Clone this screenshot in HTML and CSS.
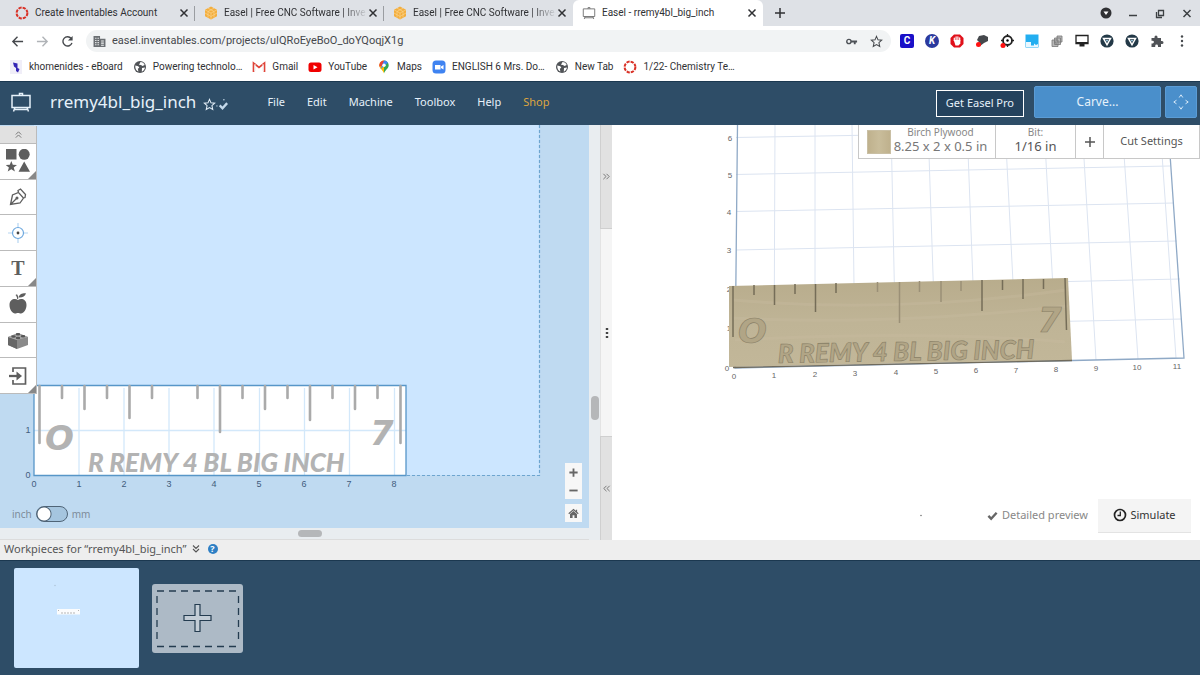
FILE: index.html
```
<!DOCTYPE html>
<html lang="en">
<head>
<meta charset="utf-8">
<meta name="viewport" content="width=device-width, initial-scale=1">
<title>Easel - rremy4bl_big_inch</title>
<link rel="stylesheet" href="styles.css">
</head>
<body>
<svg class="defs" aria-hidden="true">
  <symbol id="close" viewBox="0 0 10 10"><path d="M1.500 1.500l7 7M8.500 1.500l-7 7" fill="none" stroke="currentColor" stroke-width="1.500"/></symbol>
  <symbol id="ring" viewBox="0 0 14 14"><circle cx="7" cy="7" r="5.400" fill="none" stroke="#d93025" stroke-width="2" stroke-dasharray="3.200 1.040"/></symbol>
  <symbol id="hex" viewBox="0 0 14 14"><path d="M7 .5l6 3.300v6.500L7 13.600 1 10.300V3.800z" fill="#f3ae3d"/><path d="M1 3.800l6 3.300 6-3.300M7 7v6.500M4 2.200l6 3.300v6M10 2.200L4 5.500v6M1 7l6 3.500L13 7" fill="none" stroke="#f9d28e" stroke-width=".7"/></symbol>
  <symbol id="easel" viewBox="0 0 22 22"><path d="M2 4.500h18v12H2zM9.500 4.500V2.500h3v2M5 16.500l-1.500 4M17 16.500l1.500 4M4.500 18.500h13" fill="none" stroke="currentColor" stroke-width="1.500"/></symbol>
  <symbol id="globe" viewBox="0 0 14 14"><circle cx="7" cy="7" r="6" fill="#505357"/><path d="M2.300 5.500l3 .7 1 1.500-1.500 1 .6 2.700C3.500 11 2 9 2.300 5.500zM7.500 2c2 0 3.500 1.200 4.200 3L9.500 6 8 5l-2-.3zM9 8l3-.4c-.2 1.800-1.500 3.500-3.200 4.100z" fill="#fff"/></symbol>
  <symbol id="star" viewBox="0 0 14 14"><path d="M7 1.500l1.600 3.700 4 .4-3 2.700.9 4L7 10.200l-3.500 2.100.9-4-3-2.700 4-.4z" fill="none" stroke="currentColor" stroke-width="1.100"/></symbol>
  <symbol id="vpn" viewBox="0 0 14 14"><circle cx="7" cy="7" r="6.600" fill="#233947"/><path d="M3.500 4.500h7L7 10.800z" fill="#233947" stroke="#fff" stroke-width="1.500"/><path d="M5.800 6h2.400L7 8z" fill="#9fd0e8"/></symbol>
  <symbol id="chev" viewBox="0 0 10 10"><path d="M2 5l3-3 3 3M2 8.500l3-3 3 3" fill="none" stroke="currentColor" stroke-width="1.100"/></symbol>
  <symbol id="check" viewBox="0 0 12 12"><path d="M1.500 6.500l3 3 6-6.500" fill="none" stroke="currentColor" stroke-width="2.600"/></symbol>
  <symbol id="plus" viewBox="0 0 12 12"><path d="M6 1v10M1 6h10" fill="none" stroke="currentColor" stroke-width="1.500"/></symbol>
</svg>

<div class="tabstrip">
  <div class="tab"><svg class="fav"><use href="#ring"/></svg><span class="tab-name">Create Inventables Account</span><button class="x" aria-label="Close tab"><svg><use href="#close"/></svg></button></div>
  <div class="tab"><svg class="fav"><use href="#hex"/></svg><span class="tab-name faded">Easel | Free CNC Software | Inve</span><button class="x" aria-label="Close tab"><svg><use href="#close"/></svg></button></div>
  <div class="tab"><svg class="fav"><use href="#hex"/></svg><span class="tab-name faded">Easel | Free CNC Software | Inve</span><button class="x" aria-label="Close tab"><svg><use href="#close"/></svg></button></div>
  <div class="tab active"><svg class="fav gray"><use href="#easel"/></svg><span class="tab-name">Easel - rremy4bl_big_inch</span><button class="x" aria-label="Close tab"><svg><use href="#close"/></svg></button></div>
  <button class="newtab" aria-label="New tab"><svg><use href="#plus"/></svg></button>
  <div class="winctl">
    <button aria-label="Tab search"><svg viewBox="0 0 14 14"><circle cx="7" cy="7" r="5.500" fill="#303134"/><path d="M4.500 5.500h5L7 9z" fill="#fff"/></svg></button>
    <button aria-label="Minimize"><svg viewBox="0 0 14 14"><path d="M3 9.500h8" stroke="#3c4043" stroke-width="1.500"/></svg></button>
    <button aria-label="Restore"><svg viewBox="0 0 14 14"><path d="M5.500 4.500h5v5h-5zM3.500 6v5.500H9" fill="none" stroke="#3c4043" stroke-width="1.300"/></svg></button>
    <button aria-label="Close"><svg viewBox="0 0 14 14"><path d="M3.500 4l7 7M10.500 4l-7 7" stroke="#3c4043" stroke-width="1.500"/></svg></button>
  </div>
</div>

<div class="navbar">
  <button aria-label="Back"><svg viewBox="0 0 14 14"><path d="M13 7H2M7 2L2 7l5 5" fill="none" stroke="#45484c" stroke-width="1.500"/></svg></button>
  <button aria-label="Forward"><svg viewBox="0 0 14 14"><path d="M1 7h11M7 2l5 5-5 5" fill="none" stroke="#b0b3b7" stroke-width="1.500"/></svg></button>
  <button aria-label="Reload"><svg viewBox="0 0 14 14"><path d="M11.800 8.500A5 5 0 1 1 11 3.800" fill="none" stroke="#45484c" stroke-width="1.500"/><path d="M12.500 1v5h-5z" fill="#45484c"/></svg></button>
  <div class="omnibox">
    <svg class="site" viewBox="0 0 12 12"><path d="M.5 1h6v2.500h5V11H.5z" fill="#6b6f73"/><path d="M2 3h1.200M4.200 3h1.200M2 5h1.200M4.200 5h1.200M2 7h1.200M4.200 7h1.200M2 9h1.200M4.200 9h1.200M7.500 5.500h2.500M7.500 7.500h2.500M7.500 9.500h2.500" stroke="#f1f3f4"/></svg>
    <input type="text" aria-label="Address" value="easel.inventables.com/projects/uIQRoEyeBoO_doYQoqjX1g">
    <svg class="ic" viewBox="0 0 14 14"><path d="M6.500 6H13v2h-1.500v2h-2V8h-3" fill="#4d5156"/><circle cx="4.200" cy="7" r="2.300" fill="none" stroke="#4d5156" stroke-width="1.500"/></svg>
    <svg class="ic dark"><use href="#star"/></svg>
  </div>
  <div class="exts">
    <button class="ext-c" aria-label="Clever">C</button>
    <button class="ext-k" aria-label="Kami">K</button>
    <button aria-label="Ad blocker"><svg viewBox="0 0 14 14"><path d="M4 .5h6L13.500 4v6L10 13.500H4L.5 10V4z" fill="#e0101a"/><path d="M4.300 6.500V4.200M6.100 6.500V2.800M7.900 6.500V2.800M9.700 7V3.800" stroke="#fff" stroke-width="1.200" stroke-linecap="round"/><path d="M3.700 6h6.600v3.500L8.500 11.500h-3z" fill="#fff"/></svg></button>
    <button aria-label="Pin helper"><svg viewBox="0 0 14 14"><path d="M4 2l5-1 4 2v4l-4 2-4 3-1-4-2-2z" fill="#45484c"/><circle cx="3.500" cy="10.500" r="2.500" fill="#f11"/></svg></button>
    <button aria-label="Target"><svg viewBox="0 0 14 14"><circle cx="7.500" cy="6.500" r="4.500" fill="#fff" stroke="#222" stroke-width="1.800"/><path d="M7.500 0v3M7.500 10v3M1 6.500h3M11 6.500h3" stroke="#222" stroke-width="1.300"/><circle cx="7.500" cy="6.500" r="1.200"/><circle cx="3" cy="11.500" r="2.500" fill="#f11"/></svg></button>
    <button aria-label="Desmos"><svg viewBox="0 0 14 14"><path d="M.5.5h13v13H.5z" fill="#23aef0"/><path d="M1 8h5v3.500h3V9.500l2 1.500 2-1v3H1z" fill="#e9f7ff"/></svg></button>
    <button aria-label="Copies"><svg viewBox="0 0 14 14"><path d="M2 6h6v6.500H2zM4.500 4h6v6.500h-6zM7 2h5v6H7z" fill="#b8b8b8" stroke="#777" stroke-width=".8"/><path d="M4 8h2v3" fill="none" stroke="#777"/></svg></button>
    <button aria-label="Screen share"><svg viewBox="0 0 14 14"><path d="M1 1.500h12v8H1z" fill="#fff" stroke="#222" stroke-width="1.300"/><path d="M1 8h12v2H1zM4.500 10h5v2.500h-5z" fill="#222"/></svg></button>
    <button aria-label="VPN one"><svg><use href="#vpn"/></svg></button>
    <button aria-label="VPN two"><svg><use href="#vpn"/></svg></button>
    <button aria-label="Extensions"><svg viewBox="0 0 14 14"><path d="M1.500 4h3V3a1.500 1.500 0 0 1 3 0v1H11v3h1a1.500 1.500 0 0 1 0 3h-1v3H8v-1a1.400 1.400 0 0 0-2.800 0v1H1.500v-3.500h1a1.400 1.400 0 0 0 0-2.800h-1z" fill="#505357"/></svg></button>
    <button aria-label="Menu"><svg viewBox="0 0 14 14"><g fill="#45484c"><circle cx="7" cy="2.500" r="1.200"/><circle cx="7" cy="7" r="1.200"/><circle cx="7" cy="11.500" r="1.200"/></g></svg></button>
  </div>
</div>

<nav class="bookmarks" aria-label="Bookmarks">
  <a href="#"><svg viewBox="0 0 14 14"><path d="M1 0h12v14H1z" fill="#f0eef8"/><path d="M4 2.500l4.500 1V8l2 1-1.500 3.500-2-1.500V8L5 6.500z" fill="#3425b5"/></svg>khomenides - eBoard</a>
  <a href="#"><svg><use href="#globe"/></svg>Powering technolo…</a>
  <a href="#"><svg viewBox="0 0 14 14"><path d="M1.500 12V3L7 7.500 12.500 3v9" fill="none" stroke="#e04438" stroke-width="1.700"/><path d="M3 4v7M11 4v7" stroke="#eee"/></svg>Gmail</a>
  <a href="#"><svg viewBox="0 0 14 14"><rect x=".5" y="2.500" width="13" height="9.500" rx="2.500" fill="#f00000"/><path d="M5.500 5v4.500l4-2.300z" fill="#fff"/></svg>YouTube</a>
  <a href="#"><svg viewBox="0 0 14 14"><path d="M7 .5a4.700 4.700 0 0 1 4.700 4.700C11.700 8.500 8 10 7 13.500z" fill="#34a853"/><path d="M7 .5a4.700 4.700 0 0 0-4.700 4.700C2.300 8.500 6 10 7 13.500z" fill="#fbbc04"/><path d="M7 .5a4.700 4.700 0 0 0-4.400 6.300L7 5z" fill="#ea4335"/><path d="M7 .5a4.700 4.700 0 0 1 4 2.300L3.500 9z" fill="#4285f4"/><circle cx="7" cy="5.200" r="1.700" fill="#fff"/></svg>Maps</a>
  <a href="#"><svg viewBox="0 0 14 14"><rect x=".5" y=".5" width="13" height="13" rx="3.500" fill="#3f83f1"/><path d="M3 5h5.500v4.500H3zM9 6.500L11.500 5v4.500L9 8z" fill="#fff"/></svg>ENGLISH 6 Mrs. Do…</a>
  <a href="#"><svg><use href="#globe"/></svg>New Tab</a>
  <a href="#"><svg><use href="#ring"/></svg>1/22- Chemistry Te…</a>
</nav>

<header class="header">
  <svg class="logo"><use href="#easel"/></svg>
  <h1>rremy4bl_big_inch</h1>
  <svg class="fave"><use href="#star"/></svg>
  <svg class="saved" viewBox="0 0 14 14"><path d="M4 8l3 3 5-5.500" fill="none" stroke="#c5d9ea" stroke-width="2.500"/><circle cx="1" cy="8.500" r=".7" fill="#c5d9ea"/><circle cx="8.500" cy="2" r=".8" fill="#c5d9ea"/></svg>
  <nav class="menu" aria-label="Main">
    <a href="#">File</a><a href="#">Edit</a><a href="#">Machine</a><a href="#">Toolbox</a><a href="#">Help</a><a href="#" class="shop">Shop</a>
  </nav>
  <button class="pro">Get Easel Pro</button>
  <button class="carve">Carve...</button>
  <button class="jog" aria-label="Jog machine"><svg viewBox="0 0 20 20"><path d="M8 5l2-3 2 3M8 15l2 3 2-3M5 8l-3 2 3 2M15 8l3 2-3 2" fill="none" stroke="#e4f1fb"/></svg></button>
</header>

<main class="work">
  <section class="design" aria-label="Design">
    <div class="canvas">
      <svg class="scene" viewBox="0 125 589 403" preserveAspectRatio="xMinYMin slice">
        <path d="M34 125H539V475H34z" fill="#cce6ff"/>
        <path d="M539.500 125V475.500H406" class="bed"/>
        <path d="M34 386H406V475.500H34z" fill="#fff"/>
        <path d="M79 388V475M124 388V475M169 388V475M214 388V475M259.500 388V475M304.500 388V475M349.500 388V475M394.500 388V475M34 430.500H406" class="grid"/>
        <text x="45" y="450" class="wide">O</text>
        <text x="370" y="445" class="wide">7</text>
        <text x="88" y="472" class="comic">R REMY 4 BL BIG INCH</text>
        <path d="M34 385.500H406V475.500H34z" fill="none" stroke="#5796c8" stroke-width="1.300"/>
        <path d="M39.500 386V443M62 386V398M84.500 386V409M107 386V398M129.500 386V418M152 386V398M197.500 386V398M220 386V432M242.500 386V398M265 386V409M287.500 386V398M310 386V420M332.500 386V398M355 386V409M377.500 386V398M400.500 386V443" class="ticks"/>
        <g class="axis">
          <text x="34" y="487">0</text><text x="79" y="487">1</text><text x="124" y="487">2</text><text x="169" y="487">3</text><text x="214" y="487">4</text><text x="259" y="487">5</text><text x="304" y="487">6</text><text x="349" y="487">7</text><text x="394" y="487">8</text>
          <text x="28" y="433">1</text><text x="28" y="478">0</text>
        </g>
      </svg>
      <div class="tools">
        <button class="fold" aria-label="Collapse tools"><svg><use href="#chev"/></svg></button>
        <button class="more" aria-label="Shapes"><svg viewBox="0 0 24 24"><path d="M0 0h10.500v10.500H0zM5.300 12l1.500 3.800 4.200.2-3.300 2.600 1.200 4-3.600-2.300-3.600 2.300 1.200-4L-.4 16l4.200-.2zM18.200 12.500L24 22.800H12.500z" fill="#5e5e5e"/><circle cx="18.200" cy="5.300" r="5.500" fill="#5e5e5e"/></svg></button>
        <button aria-label="Pen"><svg viewBox="0 0 24 24"><path d="M4.500 19.500L6.500 10l6-2.500 5 5.500-3.500 5zM4.500 19.500l6-6M12.500 7.500L12 5.500l2.500-1.500 5 5.500-.5 3-1.500.5" fill="none" stroke="#5e5e5e" stroke-width="1.300"/><circle cx="11" cy="13" r="1.500" fill="#5e5e5e"/></svg></button>
        <button aria-label="Drill"><svg viewBox="0 0 24 24"><path d="M12 2v5M12 17v5M2 12h5M17 12h5" stroke="#b5d5f2" stroke-width="1.200"/><circle cx="12" cy="12" r="5.500" fill="none" stroke="#6fa9df" stroke-width="1.200"/><circle cx="12" cy="12" r="1.400" fill="#444"/></svg></button>
        <button class="more type" aria-label="Text">T</button>
        <button aria-label="Icons"><svg viewBox="0 0 24 24"><path d="M12 8C9 6 3.500 7 3.500 13c0 4.500 3 8.500 5.500 8.500 1.500 0 1.500-.5 3-.5s1.500.5 3 .5c2.500 0 5.500-4 5.500-8.500 0-6-5.500-7-8.500-5zM11.200 7C11 5 10.500 4 9.500 3l1.500-.7c1 1.200 1.300 2.500 1.200 4.700zM12.500 5.500C13 2.500 16 1 20 1.200 19 4.500 16 6 12.500 5.500z" fill="#5e5e5e"/></svg></button>
        <button aria-label="Apps"><svg viewBox="0 0 24 24"><path d="M2 9l10-4 10 4v8l-11 4-9-4z" fill="#8a8a8a"/><path d="M2 9l9 3v9l-9-4z" fill="#666"/><path d="M2 9l10-4 10 4-11 3z" fill="#aaa"/><g fill="#555"><ellipse cx="7.500" cy="8.500" rx="2.300" ry="1.200"/><ellipse cx="12" cy="6.300" rx="2.300" ry="1.200"/><ellipse cx="12" cy="10" rx="2.300" ry="1.200"/><ellipse cx="17" cy="8.300" rx="2.300" ry="1.200"/></g></svg></button>
        <button class="more" aria-label="Import"><svg viewBox="0 0 24 24"><path d="M7 8V4h12.500v16H7v-4" fill="none" stroke="#5e5e5e" stroke-width="1.700"/><path d="M3 12h8" stroke="#5e5e5e" stroke-width="2.300"/><path d="M10.500 7.500l5.500 4.500-5.500 4.500z" fill="#5e5e5e"/></svg></button>
      </div>
      <label class="units"><span>inch</span><input type="checkbox"><span>mm</span></label>
      <div class="zoom">
        <button aria-label="Zoom in"><svg viewBox="0 0 12 12"><path d="M6 1.500v9M1.500 6h9" stroke="#666" stroke-width="2"/></svg></button>
        <button aria-label="Zoom out"><svg viewBox="0 0 12 12"><path d="M1.500 6h9" stroke="#666" stroke-width="2"/></svg></button>
        <button class="home" aria-label="Reset view"><svg viewBox="0 0 12 12"><path d="M6 3.200l3.800 3.300V11H7V7.800H5V11H2.200V6.500z" fill="#666"/><path d="M.8 6.300L6 1.800l5.200 4.500M9.300 1.800V4" fill="none" stroke="#666" stroke-width="1.300"/></svg></button>
      </div>
    </div>
    <div class="vscroll"><i></i></div>
    <div class="hscroll"><i></i></div>
  </section>
  <div class="splitter">
    <button class="up" aria-label="Expand design"><svg><use href="#chev"/></svg></button>
    <div class="grip"><svg viewBox="0 0 4 10"><path d="M.8 1h2.400M.8 5h2.400M.8 9h2.400" stroke="#444" stroke-width="2"/></svg></div>
    <button class="down" aria-label="Expand preview"><svg><use href="#chev"/></svg></button>
  </div>
  <section class="preview" aria-label="Preview">
    <svg class="scene" viewBox="612 125 588 415" preserveAspectRatio="xMinYMin slice">
      <defs><linearGradient id="wood" x2="0" y2="1"><stop offset="0" stop-color="#b8ac8c"/><stop offset=".5" stop-color="#bfb496"/><stop offset="1" stop-color="#c2b799"/></linearGradient></defs>
      <path d="M736 137.500L1163 130M736 174.500L1170 166M736 211.500L1174 203M736 250L1177 241M736 289L1180 279M735 328L1182 319M775 125L774 367M815 125L815 366M852 125L855 365M891 125L896 364M928 125L936 363M967 125L976 362M1005 125L1017 361M1044 125L1057 361M1082 125L1096 360M1122 125L1138 359M1160 125L1176 358" class="grid3"/>
      <path d="M737.500 125L735 368L1184 358L1168 125" fill="none" stroke="#8fa9c6" stroke-width="1.300"/>
      <g class="axis3">
        <text x="730" y="141">6</text><text x="730" y="178">5</text><text x="729" y="215">4</text><text x="729" y="253">3</text><text x="729" y="292">2</text><text x="729" y="331">1</text><text x="727" y="371">0</text>
        <text x="734" y="379">0</text><text x="774" y="378">1</text><text x="815" y="377">2</text><text x="855" y="376">3</text><text x="896" y="375">4</text><text x="936" y="374">5</text><text x="976" y="373">6</text><text x="1016" y="373">7</text><text x="1056" y="372">8</text><text x="1096" y="371">9</text><text x="1137" y="370">10</text><text x="1177" y="369">11</text>
      </g>
      <path d="M729 286L1068 278L1072 360L729 367z" fill="url(#wood)"/>
      <path d="M733 300q160 14 333-10M733 318q150 8 335-12M735 340q190-10 330 2" fill="none" stroke="#c9bea2" stroke-width="3" opacity=".3"/>
      <path d="M733 367.500L1072 360.500" stroke="#6f6a5c" stroke-width="1.300"/>
      <path d="M733 286V337M754 285V295M774.500 285V305M795 284V294M815.500 284V312M836 283V293M982 280V311M1002.500 280V290M1023 279V299M1043.500 279V289M1065 278L1066.500 330" class="cut"/>
      <path d="M877.500 282V292M899.500 282V323M919.500 281V292M941 281V302M961 281V291" class="cut soft"/>
      <text x="738" y="343" class="wide carved">O</text>
      <text x="1038" y="332" class="wide carved">7</text>
      <text x="778" y="363" class="comic carved" transform="rotate(-1 778 363)">R REMY 4 BL BIG INCH</text>
      <circle cx="921" cy="515.500" r=".8" fill="#777"/>
    </svg>
    <div class="settings">
      <button class="material"><i class="swatch"></i><span><small>Birch Plywood</small>8.25 x 2 x 0.5 in</span></button>
      <button class="bit"><span><small>Bit:</small>1/16 in</span></button>
      <button class="add" aria-label="Add bit"><svg><use href="#plus"/></svg></button>
      <button class="cutset">Cut Settings</button>
    </div>
    <div class="actions">
      <button class="detail"><svg><use href="#check"/></svg>Detailed preview</button>
      <button class="simulate"><svg viewBox="0 0 14 14"><circle cx="7" cy="7" r="5.500" fill="none" stroke="#222" stroke-width="1.700"/><path d="M7.300 3.500V7.500H4.500" fill="none" stroke="#222" stroke-width="1.300"/></svg>Simulate</button>
    </div>
  </section>
</main>

<div class="piecesbar">
  <button class="pieces">Workpieces for “rremy4bl_big_inch”<svg><use href="#chev"/></svg></button>
  <button class="help" aria-label="Help">?</button>
</div>
<footer class="tray">
  <button class="thumb" aria-label="Workpiece 1"><svg viewBox="0 0 125 100"><path d="M43 41h23v5.500H43z" fill="#fbfcfd"/><path d="M44 42.500h1M64 42.500h1M47 45h15" stroke="#b5b5b5" stroke-dasharray="2 1"/><circle cx="41" cy="17.500" r=".7" fill="#a9bfd2"/></svg></button>
  <button class="newpiece" aria-label="Add workpiece"><svg viewBox="0 0 91 68"><path d="M5 7h82M5 62.500h82" class="dash"/><path d="M5 12v48M86.500 12v48" class="dash"/><path d="M43 20.500h5v11h11v5H48v11h-5v-11H32v-5h11z" fill="#c3cdd6" stroke="#243c50" stroke-width="1.200"/></svg></button>
</footer>
</body>
</html>
```
FILE: styles.css
```
* { box-sizing: border-box; }
body {
  margin: 0;
  min-height: 100vh;
  display: flex;
  flex-direction: column;
  font: 11px/16px "Noto Sans", sans-serif;
  color: #555;
  background: #fff;
}
button {
  display: flex;
  align-items: center;
  justify-content: center;
  padding: 0;
  border: 0;
  background: none;
  font: inherit;
  color: inherit;
}
a { color: inherit; text-decoration: none; }
svg { display: block; flex: none; }
.defs { position: absolute; width: 0; height: 0; }

/* Browser frame */
.tabstrip, .navbar, .bookmarks { font: 10px/14px Roboto, sans-serif; color: #303134; }
.tabstrip { display: flex; height: 26px; background: #dee1e6; }
.tab {
  display: flex;
  align-items: center;
  flex: 0 1 189px;
  min-width: 0;
  gap: 6px;
  padding: 0 6px 0 9px;
  background: linear-gradient(#9a9da1, #9a9da1) right center / 1px 15px no-repeat;
}
.tab:first-child { flex-basis: 195px; padding-left: 15px; }
.tab:nth-child(3) { background: none; }
.tab.active { flex-basis: 190px; background: #fff; border-radius: 6px 6px 0 0; }
.tab-name { flex: 1; white-space: nowrap; }
.faded {
  margin-right: -6px;
  mask-image: linear-gradient(to right, #000 82%, transparent);
}
.fav { width: 14px; height: 14px; }
.gray { color: #777; }
.x svg { width: 10px; height: 10px; }
.newtab { width: 34px; }
.newtab svg { width: 12px; height: 12px; }
.winctl { display: flex; gap: 13px; margin-left: auto; padding-right: 6px; }
.winctl svg { width: 14px; height: 14px; }

.navbar { display: flex; align-items: center; height: 30px; padding: 0 11px; gap: 12px; }
.navbar svg { width: 13px; height: 13px; }
.omnibox {
  flex: 1;
  display: flex;
  align-items: center;
  height: 22px;
  padding: 0 8px 0 7px;
  gap: 6px;
  border-radius: 11px;
  background: #f1f3f4;
}
.omnibox input {
  flex: 1;
  min-width: 0;
  padding: 0;
  border: 0;
  background: none;
  font: 11px/16px Roboto, sans-serif;
  color: #45484c;
}
.omnibox .ic { margin-left: 6px; color: #45484c; }
.exts { display: flex; align-items: center; gap: 11px; margin-left: -3px; }
.exts button { width: 14px; height: 14px; }
.exts svg { width: 14px; height: 14px; }
.ext-c, .ext-k { color: #fff; font-weight: 700; }
.exts .ext-c { border-radius: 2px; background: #1a10c8; }
.exts .ext-k { border-radius: 50%; background: #2b3a9e; font-style: italic; }

.bookmarks { display: flex; align-items: center; height: 25px; padding: 0 9px 4px; gap: 10px; }
.bookmarks a { display: flex; align-items: center; gap: 6px; white-space: nowrap; }
.bookmarks svg { width: 14px; height: 14px; }

/* Application header */
.header {
  display: flex;
  align-items: center;
  height: 44px;
  padding: 0 3px 3px 10px;
  border-top: 1px solid #1b3850;
  background: #2e4d67;
  color: #e6f1fa;
}
.logo { width: 22px; height: 22px; margin-right: 18px; }
h1 { margin: 0 7px 0 0; font-size: 17px; line-height: 22px; font-weight: 400; }
.fave { width: 13px; height: 13px; margin-top: 4px; }
.saved { width: 13px; height: 13px; margin-top: 4px; }
.menu { display: flex; gap: 22px; margin-left: 38px; }
.shop { color: #dda53f; }
.pro {
  height: 27px;
  margin: 2px 10px 0 auto;
  padding: 0 9px;
  border: 1px solid #fff;
  background: #24425d;
}
.carve, .jog { height: 32px; border-radius: 2px; background: #4a8fcb; border: 1px solid #5b9cd5; }
.carve { width: 127px; margin-right: 4px; font-size: 12px; }
.jog { width: 32px; }
.jog svg { width: 18px; height: 18px; }

/* Work area */
.work { flex: 1; display: flex; min-height: 415px; }
.design {
  flex: 600;
  display: grid;
  grid-template: 1fr 12px / 1fr 11px;
  background: #e9edf0;
}
.canvas { position: relative; overflow: hidden; background: #bfdaf1; }
.scene { position: absolute; inset: 0; width: 100%; height: 100%; }
.bed { fill: none; stroke: #6da5d0; stroke-width: 1.2; stroke-dasharray: 3 2; }
.grid { stroke: #d3e8fa; stroke-width: 1.3; }
.ticks { stroke: #aaa; stroke-width: 2.6; stroke-linecap: round; }
.axis text { font: 9px "Liberation Sans", sans-serif; fill: #3f5c7d; text-anchor: middle; }
.wide { font: italic 700 34px "DejaVu Sans", sans-serif; fill: #b3b3b3; }
.comic { font: italic 900 26px Lato, sans-serif; fill: #b3b3b3; }
.tools {
  position: absolute;
  top: 1px;
  left: 0;
  width: 37px;
  height: 268px;
  display: grid;
  grid-template-rows: 17px repeat(7, 1fr);
  gap: 1px;
  padding: 0 1px 1px 0;
  background: #bbb;
}
.tools button { position: relative; background: #fff; }
.tools svg { width: 24px; height: 24px; }
.tools .fold { background: #e1e1e1; color: #777; }
.tools .fold svg { width: 9px; height: 9px; }
.tools .type { font: 700 20px/24px "Liberation Serif", serif; color: #5e5e5e; }
.more::after {
  content: "";
  position: absolute;
  right: 0;
  bottom: 0;
  border: 4px solid #888;
  border-top-color: transparent;
  border-left-color: transparent;
}
.units {
  position: absolute;
  left: 12px;
  bottom: 6px;
  display: flex;
  align-items: center;
  gap: 4px;
  font-size: 10px;
  color: #7d8c9a;
}
.units input {
  appearance: none;
  width: 32px;
  height: 16px;
  margin: 0;
  border: 1px solid #4f6477;
  border-radius: 8px;
  background: radial-gradient(circle at 7px 7px, #fff 6px, #4f6477 7px, #a5c5df 8px);
}
.zoom { position: absolute; right: 7px; bottom: 6px; }
.zoom button { width: 17px; height: 18px; background: #f7f7f7; }
.zoom svg { width: 11px; height: 11px; }
.zoom .home { margin-top: 5px; }
.vscroll { display: flex; flex-direction: column; align-items: center; justify-content: flex-end; padding-bottom: 108px; }
.vscroll i { width: 8px; height: 24px; border-radius: 4px; background: #b5b7b9; }
.hscroll { display: flex; justify-content: center; align-items: center; padding-left: 31px; border-bottom: 1px solid #dcdcdc; }
.hscroll i { width: 24px; height: 7px; border-radius: 4px; background: #b5b7b9; }
.splitter { display: flex; flex-direction: column; width: 12px; background: #f5f5f5; color: #777; }
.splitter button { flex: 1; background: #e1e1e1; border: 1px solid #cfcfcf; border-width: 0 0 1px 1px; }
.splitter button svg { width: 9px; height: 9px; transform: rotate(90deg); }
.splitter .down { border-width: 1px 0 0 1px; }
.splitter .down svg { transform: rotate(-90deg); }
.grip { display: flex; align-items: center; justify-content: center; flex: 0 0 207px; border-left: 1px solid #e3e3e3; }
.grip svg { width: 4px; height: 10px; }

/* Preview */
.preview { position: relative; flex: 588; overflow: hidden; background: #fff; }
.grid3 { fill: none; stroke: #dce4f1; }
.axis3 text { font: 8px "Liberation Sans", sans-serif; fill: #666; text-anchor: middle; }
.cut { fill: none; stroke: #756d58; stroke-width: 1.5; }
.soft { stroke: #9b9077; }
.carved { fill: #b1a586; stroke: #897f66; stroke-width: .6; }
.settings {
  position: absolute;
  top: 0;
  right: 0;
  display: flex;
  height: 34px;
  border: 1px solid #c8c8c8;
  border-top: 0;
  background: #fff;
}
.settings button + button { border-left: 1px solid #c8c8c8; }
.settings span { font-size: 13px; line-height: 15px; white-space: nowrap; padding-bottom: 4px; }
.settings small { display: block; font-size: 10px; line-height: 14px; color: #888; }
.material { width: 136px; gap: 3px; color: #777; }
.swatch { width: 24px; height: 24px; background: linear-gradient(90deg, #bfb18d, #c9bd9b 50%, #bfb18d); border: 1px solid #c9bfa4; }
.bit { width: 80px; }
.add { width: 28px; }
.add svg { width: 12px; height: 12px; }
.cutset { width: 96px; padding-bottom: 2px; }
.actions { position: absolute; right: 9px; bottom: 7px; display: flex; gap: 10px; }
.actions button { padding-bottom: 2px; }
.detail { gap: 4px; color: #888; }
.detail svg { width: 11px; height: 11px; color: #666; }
.simulate { width: 93px; height: 34px; gap: 3px; background: #f4f4f4; color: #333; border-bottom: 1px solid #e3e3e3; }
.simulate svg { width: 14px; height: 14px; }

/* Workpieces */
.piecesbar { display: flex; align-items: center; height: 20px; padding: 0 4px 3px; gap: 7px; background: #eee; }
.pieces { gap: 4px; }
.pieces svg { width: 10px; height: 10px; transform: rotate(180deg); }
.help { width: 10px; height: 10px; border-radius: 50%; background: #2e7fc4; color: #fff; font-size: 9px; line-height: 10px; font-weight: 700; }
.tray { display: flex; align-items: center; gap: 13px; height: 115px; padding: 0 14px; border-top: 1px solid #1b3850; background: #2e4d67; }
.thumb { width: 125px; height: 100px; border-radius: 2px; background: #cce6ff; }
.thumb svg { width: 125px; height: 100px; }
.newpiece { width: 91px; height: 69px; border-radius: 3px; background: #adbac6; }
.newpiece svg { width: 91px; height: 68px; }
.dash { stroke: #243c50; stroke-width: 1.3; stroke-dasharray: 7 5; }
```
